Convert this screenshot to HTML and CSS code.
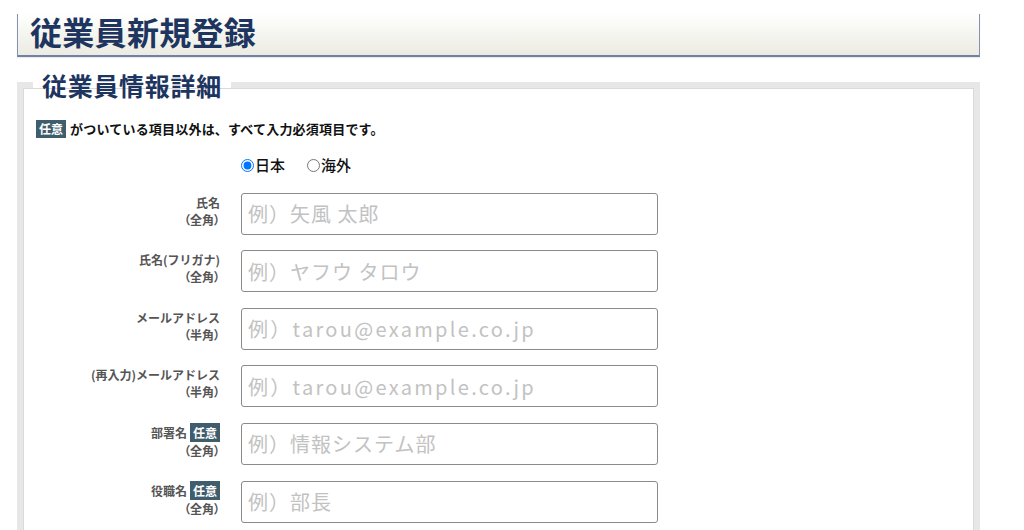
FILE: index.html
```html
<!DOCTYPE html>
<html lang="ja">
<head>
<meta charset="utf-8">
<title>従業員新規登録</title>
<link rel="stylesheet" href="styles.css">
</head>
<body>
<div class="page-head">
  <h1 class="page-title">従業員新規登録</h1>
</div>
<fieldset class="detail">
  <legend class="detail-legend">従業員情報詳細</legend>
  <p class="note"><span class="badge">任意</span>がついている項目以外は、すべて入力必須項目です。</p>
  <div class="form">
    <div class="row row-radio">
      <div class="label"></div>
      <div class="field radios">
        <label class="radio"><input type="radio" name="region" checked>日本</label>
        <label class="radio"><input type="radio" name="region">海外</label>
      </div>
    </div>
    <div class="row">
      <div class="label"><span>氏名</span><span class="unit">（全角）</span></div>
      <div class="field"><input class="text" type="text" placeholder="例）矢風 太郎"></div>
    </div>
    <div class="row">
      <div class="label"><span>氏名(フリガナ)</span><span class="unit">（全角）</span></div>
      <div class="field"><input class="text" type="text" placeholder="例）ヤフウ タロウ"></div>
    </div>
    <div class="row">
      <div class="label"><span>メールアドレス</span><span class="unit">（半角）</span></div>
      <div class="field"><input class="text latin" type="text" placeholder="例）tarou@example.co.jp"></div>
    </div>
    <div class="row">
      <div class="label"><span>(再入力)メールアドレス</span><span class="unit">（半角）</span></div>
      <div class="field"><input class="text latin" type="text" placeholder="例）tarou@example.co.jp"></div>
    </div>
    <div class="row">
      <div class="label"><span>部署名<span class="badge badge-sm">任意</span></span><span class="unit">（全角）</span></div>
      <div class="field"><input class="text" type="text" placeholder="例）情報システム部"></div>
    </div>
    <div class="row">
      <div class="label"><span>役職名<span class="badge badge-sm">任意</span></span><span class="unit">（全角）</span></div>
      <div class="field"><input class="text" type="text" placeholder="例）部長"></div>
    </div>
  </div>
</fieldset>
</body>
</html>
```

FILE: styles.css
```css
* { box-sizing: border-box; }

body {
  margin: 0;
  background: #fff;
  font-family: "Noto Sans CJK JP", "Noto Sans", sans-serif;
  color: #111;
  overflow: hidden;
}

.page-head {
  margin: 14px 44px 0 17px;
  height: 43px;
  background: linear-gradient(#ffffff, #f7f7f2 40%, #ebebe3);
  border: 1px solid #8593b3;
  border-top: none;
  border-bottom: 2px solid #6f82a6;
  box-shadow: 0 1px 1px rgba(0,0,0,0.08);
  display: flex;
  align-items: center;
  padding-left: 12px;
}

.page-title {
  margin: 0;
  font-size: 32px;
  font-weight: 700;
  line-height: 1;
  color: #1d355f;
  letter-spacing: 0.3px;
  position: relative;
  top: -4px;
}

.detail {
  margin: 13px 44px 0 17px;
  border: 6px solid #e7e7e7;
  box-shadow: inset 0 0 0 1px #dadada;
  padding: 4px 13px 40px 13px;
  min-height: 500px;
}

.detail-legend {
  margin-left: -3px;
  padding: 0 9px 0 9px;
  font-size: 25px;
  font-weight: 700;
  color: #1d355f;
  line-height: 30px;
  letter-spacing: 0.7px;
}

.note {
  margin: 16px 0 0;
  font-size: 13px;
  font-weight: 700;
  letter-spacing: 0.2px;
  line-height: 18px;
  display: flex;
  align-items: center;
}

.badge {
  display: inline-block;
  background: #3f5d6d;
  color: #fff;
  font-size: 12px;
  font-weight: 700;
  letter-spacing: 0;
  line-height: 18px;
  padding: 0 3px;
  margin-right: 4px;
}

.badge-sm {
  margin: 0 0 0 3px;
  line-height: 19px;
}

.form {
  display: flex;
  flex-direction: column;
  gap: 15.6px;
  margin-top: 17px;
}

.row {
  display: grid;
  grid-template-columns: 184px 417px;
  column-gap: 21px;
  align-items: center;
}

.row-radio {
  margin-bottom: 2px;
}

.radios {
  display: flex;
  gap: 22px;
  font-size: 15px;
  font-weight: 500;
  line-height: 20px;
}

.radio {
  display: flex;
  align-items: center;
}

.radio input {
  margin: 0 1px 0 0;
  width: 13px;
  height: 13px;
}

.label {
  display: flex;
  flex-direction: column;
  align-items: flex-end;
  font-size: 12px;
  font-weight: 700;
  color: #555;
  line-height: 17px;
  text-align: right;
  padding-bottom: 6px;
}

.label > span {
  display: flex;
  align-items: center;
}

.label .unit {
  font-feature-settings: "palt";
}

.text {
  display: block;
  width: 417px;
  height: 42px;
  border: 1px solid #8a8a8a;
  border-radius: 3px;
  padding: 0 6px;
  font-family: "Noto Sans CJK JP", "Noto Sans", sans-serif;
  font-size: 20px;
  letter-spacing: 1px;
  color: #333;
  background: #fff;
}

.text::placeholder {
  color: #c2c2c2;
}

.latin {
  letter-spacing: 2.3px;
}
```
